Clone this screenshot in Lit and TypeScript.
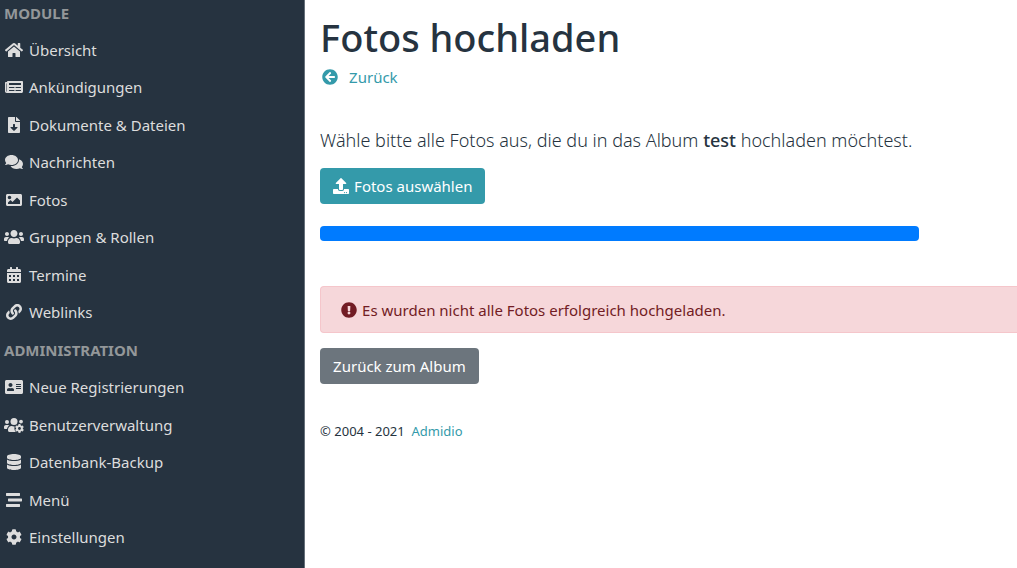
import { LitElement, html, css, svg } from "lit";
import { customElement, property } from "lit/decorators.js";

type Glyph = { width: number; shape: unknown };

const path = (width: number, d: string): Glyph => ({ width, shape: svg`<path d=${d}></path>` });

const COG =
  "M487.4 315.7l-42.6-24.6c4.3-23.2 4.3-47 0-70.2l42.6-24.6c4.9-2.8 7.1-8.6 5.5-14-11.1-35.6-30-67.8-54.7-94.6-3.8-4.1-10-5.1-14.8-2.3L380.8 110c-17.9-15.4-38.5-27.3-60.8-35.1V25.8c0-5.6-3.9-10.5-9.4-11.7-36.7-8.2-74.3-7.8-109.2 0-5.5 1.2-9.4 6.1-9.4 11.7V75c-22.2 7.9-42.8 19.8-60.8 35.1L88.7 85.5c-4.9-2.8-11-1.9-14.8 2.3-24.7 26.7-43.6 58.9-54.7 94.6-1.7 5.4.6 11.2 5.5 14L67.3 221c-4.3 23.2-4.3 47 0 70.2l-42.6 24.6c-4.9 2.8-7.1 8.6-5.5 14 11.1 35.6 30 67.8 54.7 94.6 3.8 4.1 10 5.1 14.8 2.3l42.6-24.6c17.9 15.4 38.5 27.3 60.8 35.1v49.2c0 5.6 3.9 10.5 9.4 11.7 36.7 8.2 74.3 7.8 109.2 0 5.5-1.2 9.4-6.1 9.4-11.7v-49.2c22.2-7.9 42.8-19.8 60.8-35.1l42.6 24.6c4.9 2.8 11 1.9 14.8-2.3 24.7-26.7 43.6-58.9 54.7-94.6 1.5-5.5-.7-11.3-5.6-14.1zM256 336c-44.1 0-80-35.9-80-80s35.9-80 80-80 80 35.9 80 80-35.9 80-80 80z";

const GLYPHS: Record<string, Glyph> = {
  home: path(576, "M280.37 148.26L96 300.11V464a16 16 0 0 0 16 16l112.06-.29a16 16 0 0 0 15.92-16V368a16 16 0 0 1 16-16h64a16 16 0 0 1 16 16v95.64a16 16 0 0 0 16 16.05L464 480a16 16 0 0 0 16-16V300L295.67 148.26a12.19 12.19 0 0 0-15.3 0zM571.6 251.47L488 182.56V44.05a12 12 0 0 0-12-12h-56a12 12 0 0 0-12 12v72.61L318.47 43a48 48 0 0 0-61 0L4.34 251.47a12 12 0 0 0-1.6 16.9l25.5 31A12 12 0 0 0 45.15 301l235.22-193.74a12.19 12.19 0 0 1 15.3 0L530.9 301a12 12 0 0 0 16.9-1.6l25.5-31a12 12 0 0 0-1.7-16.93z"),
  newspaper: path(576, "M552 64H88c-13.255 0-24 10.745-24 24v8H24c-13.255 0-24 10.745-24 24v272c0 30.928 25.072 56 56 56h472c26.51 0 48-21.49 48-48V88c0-13.255-10.745-24-24-24zM56 400a8 8 0 0 1-8-8V144h16v248a8 8 0 0 1-8 8zm236-16H140c-6.627 0-12-5.373-12-12v-8c0-6.627 5.373-12 12-12h152c6.627 0 12 5.373 12 12v8c0 6.627-5.373 12-12 12zm208 0H348c-6.627 0-12-5.373-12-12v-8c0-6.627 5.373-12 12-12h152c6.627 0 12 5.373 12 12v8c0 6.627-5.373 12-12 12zm-208-96H140c-6.627 0-12-5.373-12-12v-8c0-6.627 5.373-12 12-12h152c6.627 0 12 5.373 12 12v8c0 6.627-5.373 12-12 12zm208 0H348c-6.627 0-12-5.373-12-12v-8c0-6.627 5.373-12 12-12h152c6.627 0 12 5.373 12 12v8c0 6.627-5.373 12-12 12zm0-96H140c-6.627 0-12-5.373-12-12v-40c0-6.627 5.373-12 12-12h360c6.627 0 12 5.373 12 12v40c0 6.627-5.373 12-12 12z"),
  download: path(384, "M224 136V0H24C10.7 0 0 10.7 0 24v464c0 13.3 10.7 24 24 24h336c13.3 0 24-10.7 24-24V160H248c-13.2 0-24-10.8-24-24zm76.45 211.36l-96.42 95.7c-6.65 6.61-17.39 6.61-24.04 0l-96.42-95.7C73.42 337.29 80.54 320 94.82 320H160v-80c0-8.84 7.16-16 16-16h32c8.84 0 16 7.16 16 16v80h65.18c14.28 0 21.4 17.29 11.27 27.36zM377 105L279.1 7c-4.5-4.5-10.6-7-17-7H256v128h128v-6.1c0-6.3-2.5-12.4-7-16.9z"),
  comments: path(576, "M416 192c0-88.4-93.1-160-208-160S0 103.6 0 192c0 34.3 14.1 65.9 38 92-13.4 30.2-35.5 54.2-35.8 54.5-2.2 2.3-2.8 5.7-1.5 8.7S4.8 352 8 352c36.6 0 66.9-12.3 88.7-25 32.2 15.7 70.3 25 111.3 25 114.9 0 208-71.6 208-160zm122 220c23.9-26 38-57.7 38-92 0-66.9-53.5-124.2-129.3-148.1.9 6.6 1.3 13.3 1.3 20.1 0 105.9-107.7 192-240 192-10.8 0-21.3-.8-31.7-1.9C207.8 439.6 281.8 480 368 480c41 0 79.1-9.2 111.3-25 21.8 12.7 52.1 25 88.7 25 3.2 0 6.1-1.9 7.3-4.8 1.3-2.9.7-6.3-1.5-8.7-.3-.3-22.4-24.2-35.8-54.5z"),
  image: path(512, "M464 448H48c-26.51 0-48-21.49-48-48V112c0-26.51 21.49-48 48-48h416c26.51 0 48 21.49 48 48v288c0 26.51-21.49 48-48 48zM112 120c-30.928 0-56 25.072-56 56s25.072 56 56 56 56-25.072 56-56-25.072-56-56-56zM64 384h384V272l-87.515-87.515c-4.686-4.686-12.284-4.686-16.971 0L208 320l-55.515-55.515c-4.686-4.686-12.284-4.686-16.971 0L64 336v48z"),
  users: path(640, "M96 224c35.3 0 64-28.7 64-64s-28.7-64-64-64-64 28.7-64 64 28.7 64 64 64zm448 0c35.3 0 64-28.7 64-64s-28.7-64-64-64-64 28.7-64 64 28.7 64 64 64zm32 32h-64c-17.6 0-33.5 7.1-45.1 18.6 40.3 22.1 68.9 62 75.1 109.4h66c17.7 0 32-14.3 32-32v-32c0-35.3-28.7-64-64-64zm-256 0c61.9 0 112-50.1 112-112S381.9 32 320 32 208 82.1 208 144s50.1 112 112 112zm76.8 32h-8.3c-20.8 10-43.9 16-68.5 16s-47.6-6-68.5-16h-8.3C179.6 288 128 339.6 128 403.2V432c0 26.5 21.5 48 48 48h288c26.5 0 48-21.5 48-48v-28.8c0-63.6-51.6-115.2-115.2-115.2zm-223.7-13.4C161.5 263.1 145.6 256 128 256H64c-35.3 0-64 28.7-64 64v32c0 17.7 14.3 32 32 32h65.9c6.3-47.4 34.9-87.3 75.2-109.4z"),
  calendar: path(448, "M0 464c0 26.5 21.5 48 48 48h352c26.5 0 48-21.5 48-48V192H0v272zM320 256h64v64h-64zM320 384h64v64h-64zM192 256h64v64h-64zM192 384h64v64h-64zM64 256h64v64H64zM64 384h64v64H64zM400 64h-48V16c0-8.8-7.2-16-16-16h-32c-8.8 0-16 7.2-16 16v48H160V16c0-8.8-7.2-16-16-16h-32c-8.8 0-16 7.2-16 16v48H48C21.5 64 0 85.5 0 112v48h448v-48c0-26.5-21.5-48-48-48z"),
  link: path(512, "M326.612 185.391c59.747 59.809 58.927 155.698.36 214.59-.11.12-.24.25-.36.37l-67.2 67.2c-59.27 59.27-155.699 59.262-214.96 0-59.27-59.26-59.27-155.7 0-214.96l37.106-37.106c9.84-9.84 26.786-3.3 27.294 10.606.648 17.722 3.826 35.527 9.69 52.721 1.986 5.822.567 12.262-3.783 16.612l-13.087 13.087c-28.026 28.026-28.905 73.66-1.155 101.96 28.024 28.579 74.086 28.749 102.325.51l67.2-67.19c28.191-28.191 28.073-73.757 0-101.83-3.701-3.694-7.429-6.564-10.341-8.569a16.037 16.037 0 0 1-6.947-12.606c-.396-10.567 3.348-21.456 11.698-29.806l21.054-21.055c5.521-5.521 14.182-6.199 20.584-1.731a152.482 152.482 0 0 1 20.522 17.197zM467.547 44.449c-59.261-59.262-155.69-59.27-214.96 0l-67.2 67.2c-.12.12-.25.25-.36.37-58.566 58.892-59.387 154.781.36 214.59a152.454 152.454 0 0 0 20.521 17.196c6.402 4.468 15.064 3.789 20.584-1.731l21.054-21.055c8.35-8.35 12.094-19.239 11.698-29.806a16.037 16.037 0 0 0-6.947-12.606c-2.912-2.005-6.64-4.875-10.341-8.569-28.073-28.073-28.191-73.639 0-101.83l67.2-67.19c28.239-28.239 74.3-28.069 102.325.51 27.75 28.3 26.872 73.934-1.155 101.96l-13.087 13.087c-4.35 4.35-5.769 10.79-3.783 16.612 5.864 17.194 9.042 34.999 9.69 52.721.509 13.906 17.454 20.446 27.294 10.606l37.106-37.106c59.271-59.259 59.271-155.699.001-214.959z"),
  card: path(576, "M528 32H48C21.5 32 0 53.5 0 80v352c0 26.5 21.5 48 48 48h480c26.5 0 48-21.5 48-48V80c0-26.5-21.5-48-48-48zm-352 96c35.3 0 64 28.7 64 64s-28.7 64-64 64-64-28.7-64-64 28.7-64 64-64zm112 236.8c0 10.6-10 19.2-22.4 19.2H86.4C74 384 64 375.4 64 364.8v-19.2c0-31.8 30.1-57.6 67.2-57.6h5c12.3 5.1 25.7 8 39.8 8s27.6-2.9 39.8-8h5c37.1 0 67.2 25.8 67.2 57.6v19.2zM512 312c0 4.4-3.6 8-8 8H360c-4.4 0-8-3.6-8-8v-16c0-4.4 3.6-8 8-8h144c4.4 0 8 3.6 8 8v16zm0-64c0 4.4-3.6 8-8 8H360c-4.4 0-8-3.6-8-8v-16c0-4.4 3.6-8 8-8h144c4.4 0 8 3.6 8 8v16zm0-64c0 4.4-3.6 8-8 8H360c-4.4 0-8-3.6-8-8v-16c0-4.4 3.6-8 8-8h144c4.4 0 8 3.6 8 8v16z"),
  usersCog: {
    width: 640,
    shape: svg`
      <circle cx="96" cy="160" r="64"></circle>
      <circle cx="544" cy="144" r="60"></circle>
      <circle cx="320" cy="144" r="112"></circle>
      <path d="M173.1 274.6C161.5 263.1 145.6 256 128 256H64c-35.3 0-64 28.7-64 64v32c0 17.7 14.3 32 32 32h65.9c6.3-47.4 34.9-87.3 75.2-109.4z"></path>
      <path d="M128 403.2C128 339.6 179.6 288 243.2 288h8.3c21 10 44 16 68.5 16 7 0 14-.5 21-1.5-12 36-12 82-1 116 8 25 20 45 38 61.5H176c-26.5 0-48-21.5-48-48z"></path>
      <path transform="translate(349 222) scale(.57)" d=${COG}></path>`,
  },
  database: path(448, "M448 73.143v45.714C448 159.143 347.667 192 224 192S0 159.143 0 118.857V73.143C0 32.857 100.333 0 224 0s224 32.857 224 73.143zM448 176v102.857C448 319.143 347.667 352 224 352S0 319.143 0 278.857V176c48.125 33.143 136.208 48.572 224 48.572S399.874 209.143 448 176zm0 160v102.857C448 479.143 347.667 512 224 512S0 479.143 0 438.857V336c48.125 33.143 136.208 48.572 224 48.572S399.874 369.143 448 336z"),
  stream: path(512, "M16 128h416c8.84 0 16-7.16 16-16V48c0-8.84-7.16-16-16-16H16C7.16 32 0 39.16 0 48v64c0 8.84 7.16 16 16 16zm480 80H80c-8.84 0-16 7.16-16 16v64c0 8.84 7.16 16 16 16h416c8.84 0 16-7.16 16-16v-64c0-8.84-7.16-16-16-16zm-64 176H16c-8.84 0-16 7.16-16 16v64c0 8.84 7.16 16 16 16h416c8.84 0 16-7.16 16-16v-64c0-8.84-7.16-16-16-16z"),
  cog: path(512, COG),
  back: path(512, "M256 504C119 504 8 393 8 256S119 8 256 8s248 111 248 248-111 248-248 248zm28.9-143.6L209.4 288H392c13.3 0 24-10.7 24-24v-16c0-13.3-10.7-24-24-24H209.4l75.5-72.4c9.7-9.3 9.9-24.8.4-34.3l-11-10.9c-9.4-9.4-24.6-9.4-33.9 0L107.7 239c-9.4 9.4-9.4 24.6 0 33.9l132.7 132.7c9.4 9.4 24.6 9.4 33.9 0l11-10.9c9.5-9.5 9.3-25-.4-34.3z"),
  upload: path(512, "M296 384h-80c-13.3 0-24-10.7-24-24V192h-87.7c-17.8 0-26.7-21.5-14.1-34.1L242.3 5.7c7.5-7.5 19.8-7.5 27.3 0l152.2 152.2c12.6 12.6 3.7 34.1-14.1 34.1H320v168c0 13.3-10.7 24-24 24zm216-8v112c0 13.3-10.7 24-24 24H24c-13.3 0-24-10.7-24-24V376c0-13.3 10.7-24 24-24h136v8c0 30.9 25.1 56 56 56h80c30.9 0 56-25.1 56-56v-8h136c13.3 0 24 10.7 24 24zm-124 88c0-11-9-20-20-20s-20 9-20 20 9 20 20 20 20-9 20-20zm64 0c0-11-9-20-20-20s-20 9-20 20 9 20 20 20 20-9 20-20z"),
  alert: path(512, "M504 256c0 136.997-111.043 248-248 248S8 392.997 8 256C8 119.083 119.043 8 256 8s248 111.083 248 248zm-248 50c-25.405 0-46 20.595-46 46s20.595 46 46 46 46-20.595 46-46-20.595-46-46-46zm-43.673-165.346l7.418 136c.347 6.364 5.609 11.346 11.982 11.346h48.546c6.373 0 11.635-4.982 11.982-11.346l7.418-136c.375-6.874-5.098-12.654-11.982-12.654h-63.383c-6.884 0-12.356 5.78-11.981 12.654z"),
};

@customElement("app-icon")
class AppIcon extends LitElement {
  @property() name = "home";

  static styles = css`
    :host {
      display: inline-flex;
      flex: none;
      width: 20px;
      justify-content: center;
    }
    .glyph {
      display: block;
      height: 16px;
      fill: currentColor;
      fill-rule: evenodd;
    }
  `;

  render() {
    const glyph = GLYPHS[this.name];
    return html`<svg class="glyph" viewBox="0 0 ${glyph.width} 512" aria-hidden="true">${glyph.shape}</svg>`;
  }
}

const MENU = [
  {
    title: "Module",
    items: [
      ["home", "Übersicht"],
      ["newspaper", "Ankündigungen"],
      ["download", "Dokumente & Dateien"],
      ["comments", "Nachrichten"],
      ["image", "Fotos"],
      ["users", "Gruppen & Rollen"],
      ["calendar", "Termine"],
      ["link", "Weblinks"],
    ],
  },
  {
    title: "Administration",
    items: [
      ["card", "Neue Registrierungen"],
      ["usersCog", "Benutzerverwaltung"],
      ["database", "Datenbank-Backup"],
      ["stream", "Menü"],
      ["cog", "Einstellungen"],
    ],
  },
];

@customElement("app-root")
class AppRoot extends LitElement {
  @property({ type: Number }) progress = 100;

  static styles = css`
    :host {
      display: grid;
      grid-template-columns: 30% minmax(0, 1fr);
      min-height: 100vh;
      font: 15px/24px "Noto Sans", "Open Sans", sans-serif;
      color: #263340;
      background: #fff;
    }
    .sidebar {
      display: flex;
      flex-direction: column;
      box-sizing: border-box;
      padding: 0 4px 12px;
      background: #263340;
      border-right: 1px solid #66707a;
    }
    .heading {
      flex: 1 0 auto;
      display: flex;
      align-items: center;
      margin: 0;
      font-size: 15px;
      font-weight: 700;
      text-transform: uppercase;
      color: #939799;
    }
    .heading:first-child {
      flex: none;
      height: 26px;
      padding-bottom: 5px;
    }
    .entry {
      flex: 1 0 auto;
      display: flex;
      align-items: center;
      gap: 5px;
      color: #dddddd;
      text-decoration: none;
    }
    .main {
      padding: 9px 0 24px 15px;
    }
    .title {
      margin: 0;
      font-size: 38px;
      line-height: 56px;
      font-weight: 500;
    }
    .link {
      color: #349aaa;
      text-decoration: none;
    }
    .back {
      display: inline-flex;
      align-items: center;
      gap: 9px;
    }
    .lead {
      margin: 33px 0 12px;
      font-size: 18px;
      line-height: 32px;
      font-weight: 300;
    }
    .lead strong {
      font-weight: 500;
    }
    .button {
      display: flex;
      align-items: center;
      gap: 3px;
      height: 36px;
      padding: 0 13px;
      border: 0;
      border-radius: 4px;
      font: inherit;
      color: #fff;
    }
    .primary {
      padding-left: 11px;
      background: #349aaa;
    }
    .secondary {
      background: #6c757d;
    }
    .track {
      max-width: 599px;
      height: 15px;
      margin: 22px 0 45px;
      overflow: hidden;
      border-radius: 4px;
      background: #e9ecef;
    }
    .bar {
      height: 100%;
      background: #007bff;
    }
    .alert {
      display: flex;
      align-items: center;
      gap: 3px;
      margin-bottom: 15px;
      padding: 11px 18px 10px;
      border: 1px solid #f5c6cb;
      border-right: 0;
      border-radius: 4px 0 0 4px;
      color: #721c24;
      background: #f6d7da;
    }
    .footer {
      margin-top: 35px;
      font-size: 13px;
    }
  `;

  render() {
    return html`
      <nav class="sidebar" aria-label="Menü">
        ${MENU.map(
          (group) => html`
            <h2 class="heading">${group.title}</h2>
            ${group.items.map(
              ([icon, label]) => html`<a class="entry" href="#"><app-icon name=${icon}></app-icon>${label}</a>`
            )}
          `
        )}
      </nav>
      <main class="main">
        <h1 class="title">Fotos hochladen</h1>
        <a class="link back" href="#"><app-icon name="back"></app-icon>Zurück</a>
        <p class="lead">
          Wähle bitte alle Fotos aus, die du in das Album <strong>test</strong> hochladen möchtest.
        </p>
        <button class="button primary" type="button"><app-icon name="upload"></app-icon>Fotos auswählen</button>
        <div class="track" role="progressbar" aria-valuenow=${this.progress} aria-valuemin="0" aria-valuemax="100">
          <div class="bar" style="width: ${this.progress}%"></div>
        </div>
        <div class="alert" role="alert">
          <app-icon name="alert"></app-icon>Es wurden nicht alle Fotos erfolgreich hochgeladen.
        </div>
        <button class="button secondary" type="button">Zurück zum Album</button>
        <footer class="footer">© 2004 - 2021&nbsp; <a class="link" href="#">Admidio</a></footer>
      </main>
    `;
  }
}
